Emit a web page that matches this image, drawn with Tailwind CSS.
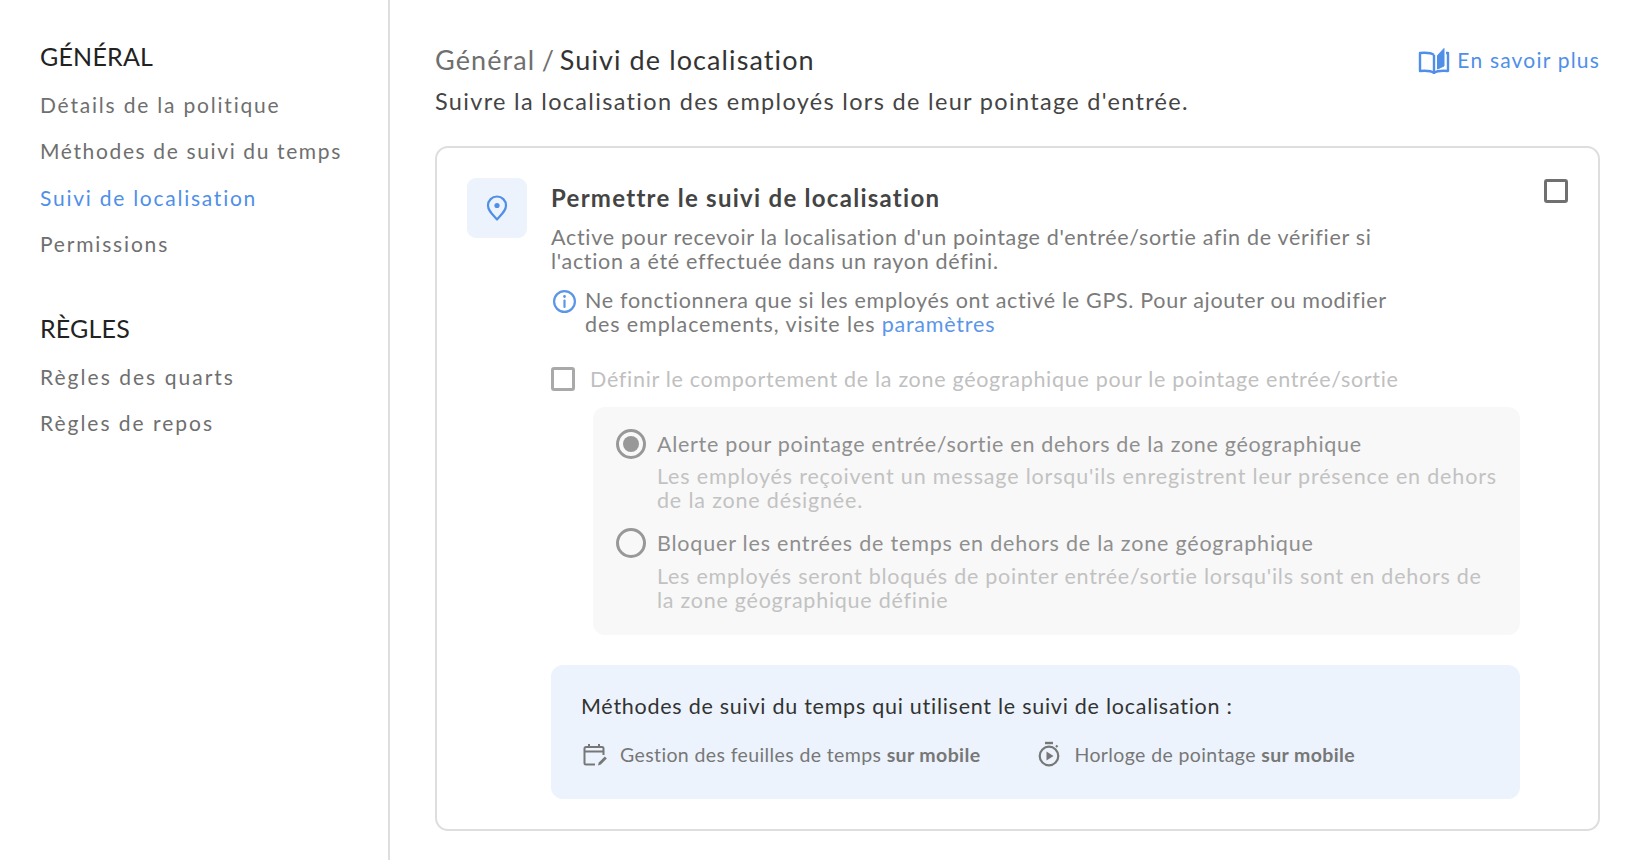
<!doctype html>
<html lang="fr"><head><meta charset="utf-8">
<script src="https://cdn.jsdelivr.net/npm/@tailwindcss/browser@4"></script>
</head>
<body class="bg-white font-['Lato','Noto_Sans',sans-serif] overflow-hidden">
<div class="flex h-[860px] w-[1642px]">
  <aside class="w-[390px] shrink-0 border-r-2 border-[#dedede] pl-10 pt-[42px]">
    <h2 class="text-[25px] leading-[28px] text-[#222] tracking-[0.2px]">GÉNÉRAL</h2>
    <nav class="mt-[12px] flex flex-col text-[#6f6f6f] text-[21px]">
      <a class="h-[46.4px] leading-[46.4px] tracking-[1.8px]">Détails de la politique</a>
      <a class="h-[46.4px] leading-[46.4px] tracking-[1.63px]">Méthodes de suivi du temps</a>
      <a class="h-[46.4px] leading-[46.4px] tracking-[1.75px] text-[#4f8fe8]">Suivi de localisation</a>
      <a class="h-[46.4px] leading-[46.4px] tracking-[1.82px]">Permissions</a>
    </nav>
    <h2 class="mt-[46px] text-[25px] leading-[28px] text-[#222] tracking-[0.2px]">RÈGLES</h2>
    <nav class="mt-[12px] flex flex-col text-[#6f6f6f] text-[21px]">
      <a class="h-[46.4px] leading-[46.4px] tracking-[2.03px]">Règles des quarts</a>
      <a class="h-[46.4px] leading-[46.4px] tracking-[1.98px]">Règles de repos</a>
    </nav>
  </aside>
  <main class="flex-1 pl-[45px] pr-[42px] pt-[43px]">
    <div class="flex items-center justify-between h-[34px]">
      <div class="text-[27px] text-[#333] tracking-[1.1px]"><span class="text-[#6f6f6f] tracking-[1.1px]">Général</span><span class="text-[#6f6f6f] tracking-[-0.5px]"> / </span>Suivi de localisation</div>
      <a class="flex items-center gap-[7px] text-[#4f8fe8] text-[21px] tracking-[1.2px]">
        <svg class="w-[32px] h-[28px]" viewBox="0 0 32 28" fill="none" stroke="#4f8fe8" stroke-width="2.4" stroke-linejoin="round"><path d="M16 9C13.5 7 8 6.500 2 7v18c6-.5 11.500 0 14 2 2.500-2 8-2.500 14-2V7h-2M16 9v18"/><path d="M19.500 9.500 26 2.500V20l-6.500 3z" fill="#4f8fe8" stroke-width="1"/></svg>
        <span>En savoir plus</span>
      </a>
    </div>
    <p class="mt-[7px] h-[34px] leading-[34px] text-[23.5px] tracking-[1.32px] text-[#444]">Suivre la localisation des employés lors de leur pointage d'entrée.</p>
    <section class="mt-[28px] relative h-[685px] border-2 border-[#dedede] rounded-[13px] pl-[30px] pt-[30px] flex gap-[24px]">
      <div class="w-[60px] h-[60px] shrink-0 rounded-[9px] bg-[#ecf3fc] flex items-center justify-center">
        <svg class="w-[22px] h-[26px]" viewBox="0 0 22 26" fill="none" stroke="#4f8fe8" stroke-width="2.2"><path d="M11 24.500C6 19 2 15.500 2 10.500a9 9 0 0 1 18 0c0 5-4 8.500-9 14z" stroke-linejoin="round"/><circle cx="11" cy="10.500" r="2.600" fill="#4f8fe8" stroke="none"/></svg>
      </div>
      <div class="w-[969px] shrink-0">
        <h3 class="font-bold text-[24px] leading-[28px] text-[#444] tracking-[1.27px] mt-[6px]">Permettre le suivi de localisation</h3>
        <p class="mt-[13px] text-[21.5px] leading-[24px] tracking-[0.69px] text-[#7b7b7b] w-[830px]">Active pour recevoir la localisation d'un pointage d'entrée/sortie afin de vérifier si<br>l'action a été effectuée dans un rayon défini.</p>
        <div class="mt-[15px] flex gap-[9px]">
          <svg class="w-[25px] h-[25px] shrink-0 mt-[1px] ml-[1px]" viewBox="0 0 25 25" fill="none" stroke="#5b96e8" stroke-width="2.200"><circle cx="12.500" cy="12.500" r="10.400"/><path d="M12.500 11.500v6.500" stroke-linecap="round"/><circle cx="12.500" cy="7.500" r="1.400" fill="#5b96e8" stroke="none"/></svg>
          <p class="text-[21.5px] leading-[24px] tracking-[0.69px] text-[#7b7b7b] w-[820px] -ml-[1px]">Ne fonctionnera que si les employés ont activé le GPS. Pour ajouter ou modifier<br><span class="tracking-[0.9px]">des emplacements, visite les</span> <span class="text-[#5b96e8] tracking-[0.78px]">paramètres</span></p>
        </div>
        <div class="mt-[31px] flex items-center gap-[15px] h-[24px]">
          <div class="w-[24px] h-[24px] rounded-[3px] border-[3px] border-[#a9a9a9]"></div>
          <span class="text-[21.5px] tracking-[0.7px] text-[#c0c0c0]">Définir le comportement de la zone géographique pour le pointage entrée/sortie</span>
        </div>
        <div class="mt-[16px] ml-[42px] w-[927px] h-[228px] rounded-[12px] bg-[#f8f8f8] pl-[23px] pt-[22px]">
          <div class="flex gap-[11px]">
            <div class="w-[30px] h-[30px] shrink-0 rounded-full border-[3px] border-[#989898] flex items-center justify-center"><div class="w-[16px] h-[16px] rounded-full bg-[#989898]"></div></div>
            <div>
              <div class="h-[30px] leading-[30px] text-[21.5px] tracking-[0.7px] text-[#8f8f8f]">Alerte pour pointage entrée/sortie en dehors de la zone géographique</div>
              <p class="mt-[5px] text-[21.5px] leading-[24px] tracking-[0.83px] whitespace-nowrap text-[#c2c2c2]">Les employés reçoivent un message lorsqu'ils enregistrent leur présence en dehors<br>de la zone désignée.</p>
            </div>
          </div>
          <div class="flex gap-[11px] mt-[16px]">
            <div class="w-[30px] h-[30px] shrink-0 rounded-full border-[3px] border-[#989898]"></div>
            <div>
              <div class="h-[30px] leading-[30px] text-[21.5px] tracking-[0.8px] text-[#8f8f8f]">Bloquer les entrées de temps en dehors de la zone géographique</div>
              <p class="mt-[6px] text-[21.5px] leading-[24px] tracking-[0.75px] whitespace-nowrap text-[#c2c2c2]">Les employés seront bloqués de pointer entrée/sortie lorsqu'ils sont en dehors de<br>la zone géographique définie</p>
            </div>
          </div>
        </div>
        <div class="mt-[30px] h-[134px] rounded-[12px] bg-[#ecf3fc] pl-[30px] pt-[28px]">
          <p class="text-[21.500px] leading-[26px] tracking-[0.74px] text-[#333]">Méthodes de suivi du temps qui utilisent le suivi de localisation :</p>
          <div class="mt-[21px] flex items-center text-[19.500px] tracking-[0.38px] text-[#777]">
            <svg class="w-[24px] h-[24px] shrink-0 ml-[2px]" viewBox="0 0 24 24" fill="none" stroke="#777" stroke-width="2"><path d="M12 21.500H3a1.500 1.500 0 0 1-1.500-1.500V5.500A1.500 1.500 0 0 1 3 4h16a1.500 1.500 0 0 1 1.500 1.500V12M1.500 8.500h19M6 1v4M16 1v4"/><path d="M15 22.500l.8-3 6-6 2 2-6 6z" fill="#777" stroke="none"/></svg>
            <span class="ml-[13px]">Gestion des feuilles de temps <b class="font-bold">sur mobile</b></span>
            <svg class="ml-[58px] -mt-[2px] w-[22px] h-[26px] shrink-0" viewBox="0 0 22 26" fill="none" stroke="#777" stroke-width="2.200"><circle cx="11" cy="15" r="9.300"/><path d="M7 2h8" stroke-width="2.400"/><path d="M18 6l1.500-1.500"/><path d="M8.500 10.500l7 4.500-7 4.500z" fill="#777" stroke="none"/></svg>
            <span class="ml-[14px]">Horloge de pointage <b class="font-bold">sur mobile</b></span>
          </div>
        </div>
      </div>
      <div class="absolute right-[30px] top-[31px] w-[24px] h-[24px] rounded-[3px] border-[3px] border-[#707070]"></div>
    </section>
  </main>
</div>
</body></html>
